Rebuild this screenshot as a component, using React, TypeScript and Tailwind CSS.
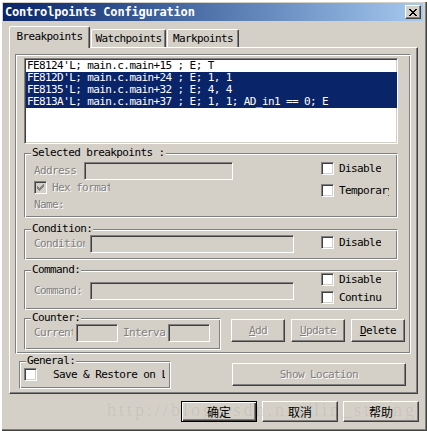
import React from "react";

const mono = "font-['DejaVu_Sans_Mono',monospace] text-[11px] tracking-[-0.6px]";
const cjk = "font-['Noto_Sans_CJK_SC',sans-serif] text-[12px] tracking-normal";
const dis = "text-[#808080] [text-shadow:1px_1px_0_#fff]";
const raised =
  "border border-t-white border-l-white border-r-[#404040] border-b-[#404040] shadow-[inset_-1px_-1px_0_#808080]";
const sunken =
  "border border-t-[#808080] border-l-[#808080] border-r-white border-b-white shadow-[inset_1px_1px_0_#404040,inset_-1px_-1px_0_#d4d0c8]";
const etched =
  "border border-t-[#808080] border-l-[#808080] border-r-white border-b-white shadow-[inset_1px_1px_0_#fff,inset_-1px_-1px_0_#808080]";

const CLOSE = ["xx....xx", ".xx..xx.", "..xxxx..", "...xx...", "..xxxx..", ".xx..xx.", "xx....xx"];
const TICK = ["......x", ".....xx", "x...xxx", "xx.xxx.", "xxxxx..", ".xxx...", "..x...."];

function Pixels({ rows, color = "#000" }: { rows: string[]; color?: string }) {
  return (
    <svg width={rows[0].length} height={rows.length} shapeRendering="crispEdges">
      {rows.flatMap((r, y) =>
        r.split("").map((c, x) =>
          c === "x" ? <rect key={`${x}-${y}`} x={x} y={y} width={1} height={1} fill={color} /> : null
        )
      )}
    </svg>
  );
}

function Check({ checked, disabled }: { checked?: boolean; disabled?: boolean }) {
  return (
    <div
      className={`flex h-[13px] w-[13px] shrink-0 items-center justify-center ${sunken} ${
        disabled ? "bg-[#d4d0c8]" : "bg-white"
      }`}
    >
      {checked && <Pixels rows={TICK} color={disabled ? "#808080" : "#000"} />}
    </div>
  );
}

function CheckRow({ label, width, className = "" }: { label: string; width?: string; className?: string }) {
  return (
    <div className={`flex h-[13px] items-center ${className}`}>
      <Check />
      <span className={`ml-[5px] overflow-hidden whitespace-nowrap leading-[12px] ${width ?? ""}`}>{label}</span>
    </div>
  );
}

function Group({ label, className, children }: { label: string; className: string; children?: React.ReactNode }) {
  return (
    <div className={`relative shrink-0 ${etched} ${className}`}>
      <span className="absolute -top-[7px] left-[6px] whitespace-nowrap bg-[#d4d0c8] px-[1px] leading-[12px]">
        {label}
      </span>
      {children}
    </div>
  );
}

function Field({ className }: { className: string }) {
  return <div className={`h-[18px] shrink-0 bg-[#d4d0c8] ${sunken} ${className}`} />;
}

function Label({ text, box, clip }: { text: string; box: string; clip: string }) {
  return (
    <div className={`shrink-0 ${box}`}>
      <div className={`overflow-hidden whitespace-nowrap leading-[12px] ${dis} ${clip}`}>{text}</div>
    </div>
  );
}

function Button({ children, className, disabled }: { children: React.ReactNode; className: string; disabled?: boolean }) {
  return (
    <div className={`flex shrink-0 items-center justify-center leading-[12px] ${raised} ${disabled ? dis : ""} ${className}`}>
      {children}
    </div>
  );
}

const rows = [
  { text: "FE8124'L; main.c.main+15 ; E; T", sel: false },
  { text: "FE812D'L; main.c.main+24 ; E; 1, 1", sel: true },
  { text: "FE8135'L; main.c.main+32 ; E; 4, 4", sel: true },
  { text: "FE813A'L; main.c.main+37 ; E; 1, 1; AD_in1 == 0; E", sel: true },
];

export default function App() {
  return (
    <div
      className={`relative flex h-[431px] w-[427px] flex-col overflow-hidden bg-[#d4d0c8] text-black ${mono} shadow-[inset_2px_2px_0_#fff,inset_-1px_-1px_0_#404040,inset_-2px_-2px_0_#808080]`}
    >
      {/* title bar */}
      <div className="ml-[3px] mt-[3px] flex h-[18px] w-[420px] shrink-0 items-center justify-between bg-linear-to-r from-[#0a246a] to-[#a6caf0]">
        <span className="pl-[2px] text-[12px] font-bold leading-[18px] tracking-[-0.2px] text-white">
          Controlpoints Configuration
        </span>
        <div className={`mr-[2px] flex h-[14px] w-[16px] items-center justify-center bg-[#d4d0c8] ${raised}`}>
          <Pixels rows={CLOSE} />
        </div>
      </div>

      {/* tabs */}
      <div className="flex h-[26px] shrink-0 items-end pl-[9px]">
        <div className="relative z-10 -mb-[1px] flex h-[22px] w-[81px] justify-center rounded-t-[2px] border-l border-r border-t border-l-white border-r-[#404040] border-t-white bg-[#d4d0c8] pt-[4px] leading-[12px] shadow-[inset_-1px_0_0_#808080]">
          Breakpoints
        </div>
        <div className="ml-[1px] flex h-[18px] w-[75px] justify-center rounded-t-[2px] border-l border-r border-t border-l-white border-r-[#404040] border-t-white pt-[3px] leading-[12px] shadow-[inset_-1px_0_0_#808080]">
          Watchpoints
        </div>
        <div className="ml-[1px] flex h-[18px] w-[72px] justify-center rounded-t-[2px] border-l border-r border-t border-l-white border-r-[#404040] border-t-white pt-[3px] leading-[12px] shadow-[inset_-1px_0_0_#808080]">
          Markpoints
        </div>
      </div>

      {/* tab panel */}
      <div
        className={`ml-[9px] flex h-[347px] w-[409px] shrink-0 flex-col border border-b-[#404040] border-l-white border-r-[#404040] border-t-white shadow-[inset_-1px_-1px_0_#808080]`}
      >
        <div className={`ml-[5px] mt-[6px] flex h-[300px] w-[396px] shrink-0 flex-col ${etched}`}>
          {/* list */}
          <div className={`ml-[8px] mt-[3px] h-[86px] w-[374px] shrink-0 bg-white pl-[1px] pt-[1px] ${sunken}`}>
            {rows.map((r) => (
              <div
                key={r.text}
                className={`h-[12px] whitespace-nowrap pl-[1px] leading-[12px] ${
                  r.sel ? "w-[371px] bg-[#0a246a] text-white" : ""
                }`}
              >
                {r.text}
              </div>
            ))}
          </div>

          <Group label="Selected breakpoints :" className="ml-[8px] mt-[9px] flex h-[65px] w-[374px]">
            <div className="flex w-[296px] flex-col pl-[9px] pt-[8px]">
              <div className="flex h-[18px] items-center">
                <Label text="Address" box="w-[50px]" clip="w-[50px]" />
                <Field className="w-[149px]" />
              </div>
              <div className="mt-[1px] flex h-[13px] items-center">
                <Check checked disabled />
                <span className={`ml-[5px] w-[58px] overflow-hidden whitespace-nowrap leading-[12px] ${dis}`}>
                  Hex format
                </span>
              </div>
              <div className={`mt-[5px] h-[12px] leading-[12px] ${dis}`}>Name:</div>
            </div>
            <div className="flex flex-col pt-[8px]">
              <CheckRow label="Disable" />
              <CheckRow label="Temporary" width="w-[50px]" className="mt-[9px]" />
            </div>
          </Group>

          <Group label="Condition:" className="ml-[8px] mt-[11px] flex h-[31px] w-[374px] pl-[9px] pt-[5px]">
            <div className="flex h-[18px] items-center">
              <Label text="Condition" box="w-[56px]" clip="w-[51px]" />
              <Field className="w-[204px]" />
            </div>
            <CheckRow label="Disable" className="ml-[27px] mt-[1px]" />
          </Group>

          <Group label="Command:" className="ml-[8px] mt-[10px] flex h-[40px] w-[374px]">
            <div className="flex w-[296px] pl-[9px] pt-[11px]">
              <div className="flex h-[18px] items-center">
                <Label text="Command:" box="w-[56px]" clip="w-[56px]" />
                <Field className="w-[204px]" />
              </div>
            </div>
            <div className="flex flex-col pt-[2px]">
              <CheckRow label="Disable" />
              <CheckRow label="Continue" width="w-[43px]" className="mt-[5px]" />
            </div>
          </Group>

          <div className="ml-[8px] mt-[8px] flex">
            <Group label="Counter:" className="flex h-[32px] w-[197px] pl-[9px] pt-[5px]">
              <div className="flex h-[18px] items-center">
                <Label text="Current:" box="w-[42px]" clip="w-[39px]" />
                <Field className="w-[42px]" />
                <Label text="Interval:" box="w-[50px] pl-[5px]" clip="w-[43px]" />
                <Field className="w-[42px]" />
              </div>
            </Group>
            <Button disabled className="ml-[10px] mt-[1px] h-[23px] w-[54px]">
              <u>A</u>dd
            </Button>
            <Button disabled className="ml-[6px] mt-[1px] h-[23px] w-[54px]">
              <u>U</u>pdate
            </Button>
            <Button className="ml-[6px] mt-[1px] h-[23px] w-[54px]">
              <u>D</u>elete
            </Button>
          </div>
        </div>

        <div className="mt-[7px] flex pl-[9px]">
          <Group label="General:" className="flex h-[28px] w-[152px] pl-[4px] pt-[6px]">
            <div className="flex h-[13px] items-center">
              <Check />
              <span className="ml-[16px] w-[112px] overflow-hidden whitespace-nowrap leading-[12px]">
                Save &amp; Restore on Load
              </span>
            </div>
          </Group>
          <Button disabled className="ml-[61px] mt-[2px] h-[23px] w-[174px]">
            Show Location
          </Button>
        </div>
      </div>

      {/* dialog buttons */}
      <div className={`ml-[181px] mt-[7px] flex gap-[5px] ${cjk}`}>
        <div className="flex h-[21px] w-[76px] items-center justify-center border border-black leading-[14px] shadow-[inset_1px_1px_0_#fff,inset_-1px_-1px_0_#404040,inset_-2px_-2px_0_#808080]">
          确定
        </div>
        <Button className="h-[21px] w-[76px] leading-[14px]">取消</Button>
        <Button className="h-[21px] w-[76px] leading-[14px]">帮助</Button>
      </div>

      <div className="pointer-events-none absolute left-[107px] top-[401px] whitespace-nowrap font-['Liberation_Serif',serif] text-[18px] leading-[18px] tracking-[3px] text-black/[0.07]">
        http://blog.csdn.net/lin_strong
      </div>
    </div>
  );
}
